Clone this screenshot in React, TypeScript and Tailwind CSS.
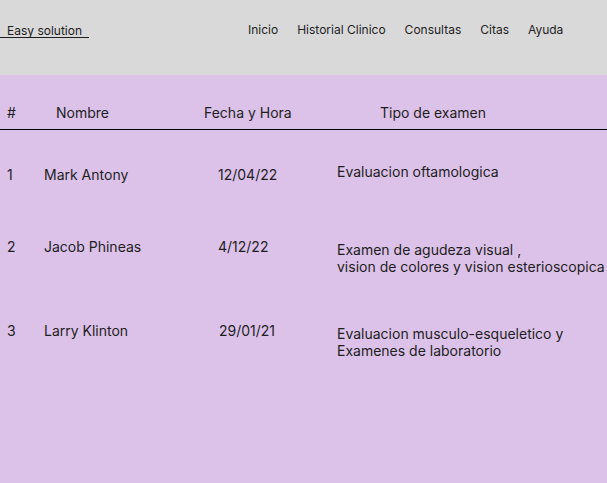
import React from "react";

const rows = [
  { n: "1", name: "Mark Antony", date: "12/04/22", exam: ["Evaluacion oftamologica"], mt: "mt-[33px]", nameMt: "mt-[3px]", examMt: "mt-0", dateMl: "ml-0" },
  { n: "2", name: "Jacob Phineas", date: "4/12/22", exam: ["Examen de agudeza visual ,", "vision de colores y vision esterioscopica"], mt: "mt-[55px]", nameMt: "mt-0", examMt: "mt-[3px]", dateMl: "ml-0" },
  { n: "3", name: "Larry Klinton", date: "29/01/21", exam: ["Evaluacion musculo-esqueletico y", "Examenes de laboratorio"], mt: "mt-[47px]", nameMt: "mt-0", examMt: "mt-[3px]", dateMl: "ml-px" },
];

export default function App() {
  return (
    <div className="w-[607px] h-[483px] overflow-hidden bg-[#dcc2e9] text-[#1e1e1e]" style={{ fontFamily: "Inter, 'Noto Sans', sans-serif" }}>
      <header className="h-[75px] bg-[#d9d9d9] flex items-start">
        <div className="mt-[24px] w-[89px] border-b border-[#1e1e1e] pl-[7px] text-[12px] leading-[13px]">Easy solution</div>
        <nav className="ml-[159px] mt-[22px] flex gap-[19px] text-[12px] leading-[15px]">
          <span>Inicio</span>
          <span>Historial Clinico</span>
          <span>Consultas</span>
          <span>Citas</span>
          <span>Ayuda</span>
        </nav>
      </header>
      <div className="flex pl-[7px] pt-[30px] pb-[8px] text-[14px] leading-[16px] border-b border-black">
        <div className="w-[49px]">#</div>
        <div className="w-[148px]">Nombre</div>
        <div className="w-[176px]">Fecha y Hora</div>
        <div>Tipo de examen</div>
      </div>
      {rows.map((r) => (
        <div key={r.n} className={`flex items-start pl-[7px] text-[14px] leading-[17px] ${r.mt}`}>
          <div className={`w-[37px] ${r.nameMt}`}>{r.n}</div>
          <div className={`w-[174px] ${r.nameMt}`}>{r.name}</div>
          <div className={`w-[119px] ${r.nameMt}`}><span className={r.dateMl}>{r.date}</span></div>
          <div className={r.examMt}>
            {r.exam.map((l) => (
              <div key={l} className="whitespace-nowrap">{l}</div>
            ))}
          </div>
        </div>
      ))}
    </div>
  );
}
